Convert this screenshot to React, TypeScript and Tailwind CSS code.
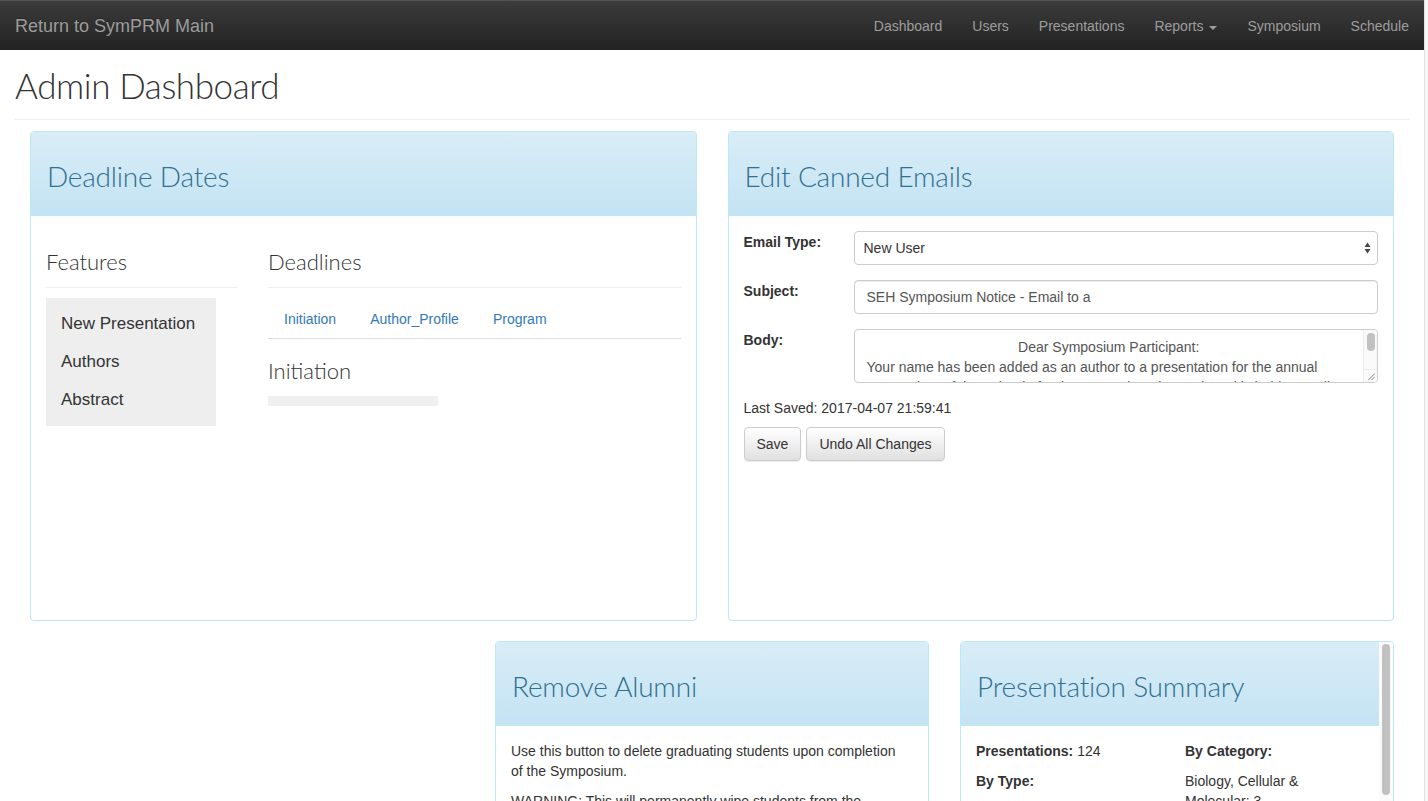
import React from "react";

const sans = "font-['Helvetica_Neue','Liberation_Sans',Arial,sans-serif]";
const thin = "font-['Lato','Open_Sans',sans-serif] font-light";

const navItems = ["Dashboard", "Users", "Presentations", "Reports", "Symposium", "Schedule"];

function PanelHeading({ title, rounded = "rounded-t-[3px]" }: { title: string; rounded?: string }) {
  return (
    <div
      className={`flex h-[84px] items-center border-b border-[#bce8f1] bg-[linear-gradient(to_bottom,#d9edf7,#c4e3f3)] px-4 pt-[5px] ${rounded}`}
    >
      <h2 className={`${thin} text-[28px] leading-none tracking-[-0.2px] text-[#31708f]`}>{title}</h2>
    </div>
  );
}

function Panel({
  title,
  children,
  className = "",
}: {
  title: string;
  children: React.ReactNode;
  className?: string;
}) {
  return (
    <div className={`rounded-[4px] border border-[#bce8f1] bg-white ${className}`}>
      <PanelHeading title={title} />
      {children}
    </div>
  );
}

function Btn({ children }: { children: React.ReactNode }) {
  return (
    <button className="h-[34px] rounded-[4px] border border-[#ccc] bg-[linear-gradient(to_bottom,#fff,#e0e0e0)] px-3 text-[14px] text-[#333] shadow-[inset_0_1px_0_rgba(255,255,255,0.15),0_1px_1px_rgba(0,0,0,0.075)]">
      {children}
    </button>
  );
}

function DeadlineDates() {
  return (
    <Panel title="Deadline Dates" className="h-[490px]">
      <div className="flex gap-[31px] px-[15px] pt-[15px]">
        <div className="w-[191px]">
          <h3 className={`${thin} mt-[18px] text-[22px] leading-[26px] text-[#333]`}>Features</h3>
          <div className="mt-3 border-t border-[#eee]" />
          <ul className="mt-[10px] w-[170px] bg-[#eee] py-[7px] pl-[15px] text-[17px] text-[#333]">
            <li className="flex h-[38px] items-center">New Presentation</li>
            <li className="flex h-[38px] items-center">Authors</li>
            <li className="flex h-[38px] items-center">Abstract</li>
          </ul>
        </div>
        <div className="flex-1">
          <h3 className={`${thin} mt-[18px] text-[22px] leading-[26px] text-[#333]`}>Deadlines</h3>
          <div className="mt-3 border-t border-[#eee]" />
          <div className="mt-[10px] flex h-[41px] items-center gap-[2px] border-b border-[#ddd] pt-[2px] text-[14px] text-[#337ab7]">
            <span className="px-4">Initiation</span>
            <span className="px-4">Author_Profile</span>
            <span className="px-4">Program</span>
          </div>
          <h3 className={`${thin} mt-[19px] text-[22px] leading-[26px] text-[#333]`}>Initiation</h3>
          <div className="mt-3 h-[10px] w-[170px] bg-[#f0f0f0]" />
        </div>
      </div>
    </Panel>
  );
}

function UpDown() {
  return (
    <svg width="7" height="12" viewBox="0 0 7 12" className="text-[#444]">
      <path d="M3.5 0.5 L6.5 5 L0.5 5 Z" fill="currentColor" />
      <path d="M3.5 11.5 L6.5 7 L0.5 7 Z" fill="currentColor" />
    </svg>
  );
}

function CannedEmails() {
  return (
    <Panel title="Edit Canned Emails" className="h-[490px]">
      <div className="px-[15px] pt-[15px] text-[14px] text-[#333]">
        <div className="flex">
          <label className="w-[110px] pt-[1px] font-bold">Email Type:</label>
          <div className="flex h-[34px] flex-1 items-center justify-between rounded-[4px] border border-[#ccc] pl-[9px] pr-[6px] text-[#333]">
            <span>New User</span>
            <UpDown />
          </div>
        </div>
        <div className="mt-[15px] flex">
          <label className="w-[110px] pt-[1px] font-bold">Subject:</label>
          <div className="flex h-[34px] flex-1 items-center rounded-[4px] border border-[#ccc] px-3 text-[#555] shadow-[inset_0_1px_1px_rgba(0,0,0,0.075)]">
            SEH Symposium Notice - Email to a
          </div>
        </div>
        <div className="mt-[15px] flex">
          <label className="w-[110px] pt-[1px] font-bold">Body:</label>
          <div className="flex h-[54px] flex-1 overflow-hidden rounded-[4px] border border-[#ccc] text-[#555]">
            <div className="h-[52px] flex-1 overflow-hidden px-3 pt-[7px] leading-[20px]">
              <p className="text-center">Dear Symposium Participant:</p>
              <p>Your name has been added as an author to a presentation for the annual</p>
              <p>Symposium of the School of Science, Engineering and Health (Friday, April</p>
            </div>
            <div className="flex w-[14px] flex-col border-l border-[#ececec] bg-[#fafafa]">
              <div className="mx-auto mt-[3px] h-[18px] w-[8px] rounded-full bg-[#c1c1c1]" />
              <div className="flex-1" />
              <svg width="13" height="13" viewBox="0 0 13 13" className="border-t border-[#ececec]">
                <path d="M4 11 L11 4 M7.5 11 L11 7.5" stroke="#777" strokeWidth="1" />
              </svg>
            </div>
          </div>
        </div>
        <p className="mt-[15px] leading-[20px]">Last Saved: 2017-04-07 21:59:41</p>
        <div className="mt-[9px] flex gap-[5px]">
          <Btn>Save</Btn>
          <Btn>Undo All Changes</Btn>
        </div>
      </div>
    </Panel>
  );
}

function RemoveAlumni() {
  return (
    <Panel title="Remove Alumni" className="h-[220px] overflow-hidden">
      <div className="pl-[15px] pr-[24px] pt-[15px] text-[14px] leading-[20px] text-[#333]">
        <p>Use this button to delete graduating students upon completion of the Symposium.</p>
        <p className="mt-[10px]">WARNING: This will permanently wipe students from the database.</p>
      </div>
    </Panel>
  );
}

function PresentationSummary() {
  return (
    <div className="flex h-[220px] overflow-hidden rounded-[4px] border border-[#bce8f1] bg-white">
      <div className="flex-1">
        <PanelHeading title="Presentation Summary" rounded="rounded-tl-[3px]" />
        <div className="grid grid-cols-2 gap-[30px] px-[15px] pt-[15px] text-[14px] leading-[20px] text-[#333]">
          <div>
            <p>
              <b>Presentations:</b> 124
            </p>
            <p className="mt-[10px] font-bold">By Type:</p>
          </div>
          <div>
            <p className="font-bold">By Category:</p>
            <p className="mt-[10px]">Biology, Cellular &amp; Molecular: 3</p>
          </div>
        </div>
      </div>
      <div className="w-[14px] bg-[#fafafa]">
        <div className="mx-auto mt-[2px] h-[151px] w-[8px] rounded-full bg-[#c1c1c1]" />
      </div>
    </div>
  );
}

export default function App() {
  return (
    <div className={`${sans} flex h-[801px] w-full overflow-hidden bg-white`}>
      <div className="w-[1424px] shrink-0">
        <nav className="flex h-[50px] items-center border-t border-[#555] bg-[linear-gradient(to_bottom,#3c3c3c,#222)] pt-[2px] text-[#9d9d9d]">
          <span className="pl-[15px] text-[18px] [text-shadow:0_-1px_0_rgba(0,0,0,0.25)]">Return to SymPRM Main</span>
          <ul className="ml-auto flex text-[14px]">
            {navItems.map((n) => (
              <li key={n} className="flex items-center px-[15px]">
                {n}
                {n === "Reports" && (
                  <span className="ml-[6px] mt-[2px] h-0 w-0 border-x-4 border-t-4 border-x-transparent border-t-[#9d9d9d]" />
                )}
              </li>
            ))}
          </ul>
        </nav>
        <div className="px-[15px]">
          <div className="flex h-[70px] items-center border-b border-[#eee] pt-[2px]">
            <h1 className={`${thin} text-[35px] leading-none tracking-[-0.4px] text-[#333]`}>Admin Dashboard</h1>
          </div>
        </div>
        <div className="grid grid-cols-2 gap-[31px] px-[30px] pt-[11px]">
          <DeadlineDates />
          <CannedEmails />
        </div>
        <div className="mt-[20px] grid grid-cols-3 gap-[31px] px-[30px]">
          <div />
          <RemoveAlumni />
          <PresentationSummary />
        </div>
      </div>
      <div className="flex-1 border-l border-[#e3e3e3] bg-[#f7f7f7]" />
    </div>
  );
}
